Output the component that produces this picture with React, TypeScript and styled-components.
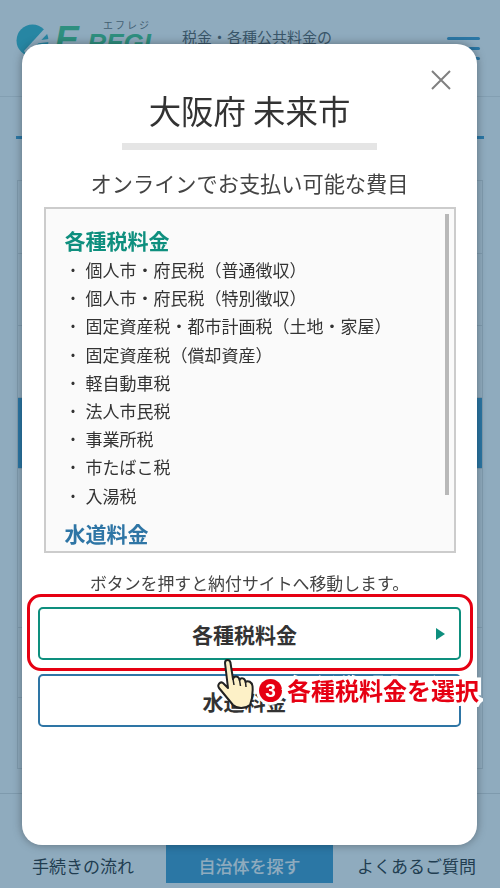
import React from "react";
import styled, { createGlobalStyle } from "styled-components";

const Global = createGlobalStyle`
  html, body { margin: 0; padding: 0; background: #fff; }
  * { box-sizing: border-box; }
  body { font-family: "Noto Sans CJK JP", "Noto Sans", sans-serif; color: #333; }
`;

const Page = styled.div`
  width: 500px; height: 888px; overflow: hidden;
  display: flex; flex-direction: column; background: #fff;
`;
const Header = styled.header`
  height: 97px; flex: none; display: flex; align-items: flex-start;
  padding: 20px 20px 0 16px; border-bottom: 1px solid #e6e6e6;
`;
const Logo = styled.div`
  width: 166px; flex: none; display: flex; align-items: flex-start; gap: 4px; padding-top: 4px;
`;
const LogoWords = styled.div`
  display: flex; flex-direction: column; align-items: flex-end; margin-top: -4px; width: 98px;
`;
const LogoKana = styled.span`
  font-size: 10px; line-height: 9px; letter-spacing: 2px; color: #666;
`;
const LogoName = styled.span`
  font: italic 700 26px/30px "Liberation Sans", sans-serif; color: #3dc781;
  white-space: nowrap; margin-top: -4px;
`;
const LogoInitial = styled.span`
  font-size: 36px;
`;
const Tagline = styled.div`
  flex: 1; font-size: 15px; line-height: 22px; color: #555; padding-top: 6px;
`;
const Burger = styled.div`
  width: 33px; display: flex; flex-direction: column; gap: 7px; padding-top: 17px;
  span { display: block; height: 3px; background: #3797cd; border-radius: 2px; }
`;
const Section = styled.section`
  flex: 1; padding: 39px 16px 0;
`;
const SectionRule = styled.div`
  height: 3px; background: #3797cd; margin-bottom: 41px;
`;
const Table = styled.div`
  margin: 0 1px; border: 1px solid #e0e0e0; border-bottom: 0;
`;
const TableRow = styled.div<{ $h: number; $active?: boolean }>`
  height: ${(p) => p.$h}px; border-bottom: 1px solid #e0e0e0;
  background: ${(p) => (p.$active ? "#3797cd" : "#fff")};
`;
const Footer = styled.footer`
  height: 95px; flex: none; border-top: 1px solid #ddd; padding: 51px 0 5px;
  display: grid; grid-template-columns: 166px 167px 167px; background: #fff;
`;
const Tab = styled.div<{ $active?: boolean }>`
  display: flex; align-items: center; justify-content: center;
  font-size: 17px; font-weight: ${(p) => (p.$active ? 500 : 400)};
  color: ${(p) => (p.$active ? "#fff" : "#222")};
  background: ${(p) => (p.$active ? "#3797cd" : "transparent")};
  padding-top: 2px;
`;
const Overlay = styled.div`
  position: fixed; inset: 0; background: rgba(31, 87, 125, 0.5);
  padding: 44px 23px 43px 22px; display: flex;
`;
const Modal = styled.div`
  position: relative; flex: 1; background: #fff; border-radius: 20px;
  box-shadow: 0 0 10px rgba(0, 0, 0, 0.35);
  display: flex; flex-direction: column; align-items: center; padding: 43px 16px 0;
`;
const Close = styled.svg`
  position: absolute; top: 26px; right: 26px; width: 20px; height: 20px;
`;
const Title = styled.h2`
  margin: 0; font-size: 32.4px; font-weight: 400; line-height: 46px; color: #333;
`;
const TitleRule = styled.div`
  width: 255px; height: 7px; background: #e5e5e5; margin: 10px 0 18px;
`;
const Subtitle = styled.p`
  margin: 0 0 9px; font-size: 21.2px; line-height: 30px; color: #444;
`;
const Box = styled.div`
  position: relative; width: 412px; height: 346px; flex: none; overflow: hidden;
  border: 2px solid #ccc; background: #fafafa; padding: 18px 19px 0;
`;
const Scrollbar = styled.div`
  position: absolute; top: 5px; left: 399px; width: 4px; height: 281px; background: #b8b8b8;
`;
const BoxHeading = styled.h3<{ $blue?: boolean }>`
  margin: -2px 0 1px; font-size: 21px; font-weight: 700; line-height: 30px;
  color: ${(p) => (p.$blue ? "#2e75a5" : "#0e8f7e")};
`;
const List = styled.ul`
  margin: 0 0 10px; padding: 0; list-style: none;
`;
const Item = styled.li`
  display: flex; font-size: 17px; line-height: 28.2px; color: #333;
  &::before { content: "・"; width: 21px; flex: none; margin-left: -2px; margin-right: 2px; font-size: 15px; text-align: center; }
`;
const Note = styled.p`
  margin: 15px 0 9px; font-size: 16.9px; line-height: 30px; color: #444; white-space: nowrap;
`;
const Actions = styled.div`
  position: relative; width: 423px;
  display: flex; flex-direction: column; gap: 14px; 
`;
const ActionButton = styled.div<{ $blue?: boolean }>`
  position: relative; height: 53px; border-radius: 5px; background: #fff;
  border: 2px solid ${(p) => (p.$blue ? "#2e75a5" : "#0e8f7e")};
  display: flex; align-items: center; justify-content: center;
  font-size: 21px; font-weight: 700; color: #333; padding: 1px 10px 0 0;
`;
const Arrow = styled.svg`
  position: absolute; right: 14px; top: 19px; width: 9px; height: 12px;
`;
const Highlight = styled.div`
  position: absolute; left: -11px; top: -13px; width: 446px; height: 77px;
  border: 3px solid #e60012; border-radius: 14px;
`;
const Hand = styled.svg`
  position: absolute; left: 179px; top: 51px; width: 37px; height: 52px;
`;
const Callout = styled.div`
  position: absolute; left: 221px; top: 68px; display: flex; align-items: center; gap: 5px;
  white-space: nowrap;
`;
const CalloutNumber = styled.span`
  width: 23px; height: 23px; border-radius: 50%; background: #e60012; color: #fff;
  box-shadow: 0 0 0 3px #fff; display: flex; align-items: center; justify-content: center;
  font: 700 19px/1 "Liberation Sans", sans-serif;
`;
const CalloutText = styled.span`
  font-size: 24px; font-weight: 700; line-height: 30px; color: #e60012;
  -webkit-text-stroke: 7px #fff; paint-order: stroke fill;
`;

const taxes = [
  "個人市・府民税（普通徴収）",
  "個人市・府民税（特別徴収）",
  "固定資産税・都市計画税（土地・家屋）",
  "固定資産税（償却資産）",
  "軽自動車税",
  "法人市民税",
  "事業所税",
  "市たばこ税",
  "入湯税",
];

export default function App() {
  return (
    <>
      <Global />
      <Page>
        <Header>
          <Logo>
            <svg width="33" height="33" viewBox="0 0 33 33">
              <circle cx="16.5" cy="16.5" r="16" fill="#2fb4c8" />
              <path d="M30 3 L8 27 L11 31 L33 8 Z" fill="#fff" />
              <path d="M17 17 L33 15 L33 18 L16 20 Z" fill="#fff" />
            </svg>
            <LogoWords>
              <LogoKana>エフレジ</LogoKana>
              <LogoName>
                <LogoInitial>E</LogoInitial>-REGI
              </LogoName>
            </LogoWords>
          </Logo>
          <Tagline>税金・各種公共料金の</Tagline>
          <Burger>
            <span />
            <span />
            <span />
          </Burger>
        </Header>
        <Section>
          <SectionRule />
          <Table>
            <TableRow $h={73} />
            <TableRow $h={72} />
            <TableRow $h={72} />
            <TableRow $h={71} $active />
            <TableRow $h={159} />
            <TableRow $h={70} />
            <TableRow $h={71} />
          </Table>
        </Section>
        <Footer>
          <Tab>手続きの流れ</Tab>
          <Tab $active>自治体を探す</Tab>
          <Tab>よくあるご質問</Tab>
        </Footer>
      </Page>
      <Overlay>
        <Modal>
          <Close viewBox="0 0 20 20">
            <path d="M1 1 L19 19 M19 1 L1 19" stroke="#808080" strokeWidth="2" fill="none" />
          </Close>
          <Title>大阪府 未来市</Title>
          <TitleRule />
          <Subtitle>オンラインでお支払い可能な費目</Subtitle>
          <Box>
            <BoxHeading>各種税料金</BoxHeading>
            <List>
              {taxes.map((t) => (
                <Item key={t}>{t}</Item>
              ))}
            </List>
            <BoxHeading $blue>水道料金</BoxHeading>
            <Scrollbar />
          </Box>
          <Note>ボタンを押すと納付サイトへ移動します。</Note>
          <Actions>
            <ActionButton>
              各種税料金
              <Arrow viewBox="0 0 9 12">
                <path d="M0 0 L9 6 L0 12 Z" fill="#0e8f7e" />
              </Arrow>
            </ActionButton>
            <ActionButton $blue>水道料金</ActionButton>
            <Highlight />
            <Hand viewBox="0 0 37 52">
              <path
                d="M8 5 C8 1 13 1 13.5 5 L16 21 C17 17 22 18 22.5 22 C24 19 28 20 28.5 24 C31 22 35 24 35.5 28 C36 34 36 39 33 47 C28 51 20 51 16 47 L2 30 C0 27 3 23 6 25 L11 30 Z"
                fill="#fdf1c7"
                stroke="#222"
                strokeWidth="2"
                strokeLinejoin="round"
              />
              <path d="M16 21 L17 27 M22.5 22 L23.5 28 M28.5 24 L29 29" stroke="#222" strokeWidth="1.5" fill="none" />
            </Hand>
            <Callout>
              <CalloutNumber>3</CalloutNumber>
              <CalloutText>各種税料金を選択</CalloutText>
            </Callout>
          </Actions>
        </Modal>
      </Overlay>
    </>
  );
}
